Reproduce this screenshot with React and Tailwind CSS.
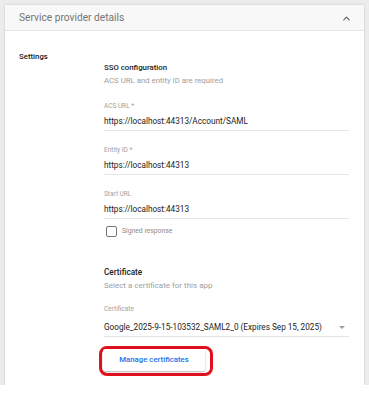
import { ChevronUp } from 'lucide-react'

function Field({ label, value, dropdown, top = 'mt-[15px]', gap = 'pt-[6px]' }) {
  return (
    <div className={top}>
      <div className="text-[6.5px] leading-[8px] text-[#a0a0a0]">{label}</div>
      <div className={`flex items-center justify-between border-b border-[#e4e4e4] pb-[4px] ${gap}`}>
        <span className="text-[8.2px] leading-[10px] text-[#222]">{value}</span>
        {dropdown && (
          <span className="mr-[4px] h-0 w-0 border-x-[3px] border-t-[3px] border-x-transparent border-t-[#9e9e9e]" />
        )}
      </div>
    </div>
  )
}

export default function App() {
  return (
    <div className="h-[396px] w-[369px] bg-white" style={{ fontFamily: 'Roboto, "Liberation Sans", sans-serif' }}>
      <div className="h-[385px] overflow-hidden bg-[#ececec] px-[5px] pt-[5px]">
        <div className="h-full bg-white shadow-[0_0_2px_rgba(0,0,0,0.18)]">
          <div className="flex h-[26px] items-center justify-between border-b border-[#e6e6e6] bg-[#f8f8f8] pl-[14px] pr-[12px]">
            <span className="pt-[1px] text-[10.2px] text-[#757575]">Service provider details</span>
            <ChevronUp className="mt-[1px] h-[11px] w-[11px] text-[#616161]" strokeWidth={2.5} />
          </div>
          <div className="flex pt-[21px]">
            <div className="w-[99px] pl-[14px] text-[7.8px] font-medium leading-[10px] text-[#202020]">Settings</div>
            <div className="w-[245px]">
              <div className="mt-[11px] text-[7.8px] font-medium leading-[10px] text-[#202020]">SSO configuration</div>
              <div className="mt-[3px] text-[7.8px] leading-[10px] text-[#9e9e9e]">ACS URL and entity ID are required</div>
              <Field label="ACS URL *" value="https://localhost:44313/Account/SAML" top="mt-[16px]" />
              <Field label="Entity ID *" value="https://localhost:44313" />
              <Field label="Start URL" value="https://localhost:44313" />
              <div className="mt-[7px] flex items-center gap-[5px] pl-[2px]">
                <span className="h-[11px] w-[11px] rounded-[2px] border-[1.5px] border-[#757575]" />
                <span className="text-[6.8px] text-[#8a8a8a]">Signed response</span>
              </div>
              <div className="mt-[30px] text-[8.2px] font-medium leading-[10px] text-[#202020]">Certificate</div>
              <div className="mt-[4px] text-[8px] leading-[10px] text-[#9e9e9e]">Select a certificate for this app</div>
              <Field
                label="Certificate"
                value="Google_2025-9-15-103532_SAML2_0 (Expires Sep 15, 2025)"
                dropdown
                top="mt-[14px]"
                gap="pt-[9px]"
              />
              <div className="ml-[-5px] mt-[9px] inline-flex rounded-[8px] border-[3px] border-[#e0101c] pb-[2px] pl-[1px] pr-[5px]">
                <button className="h-[22px] w-[102px] rounded-[2px] bg-white text-[7.8px] font-medium text-[#1a73e8] shadow-[0_1px_2px_rgba(0,0,0,0.3)]">
                  Manage certificates
                </button>
              </div>
            </div>
          </div>
        </div>
      </div>
    </div>
  )
}
